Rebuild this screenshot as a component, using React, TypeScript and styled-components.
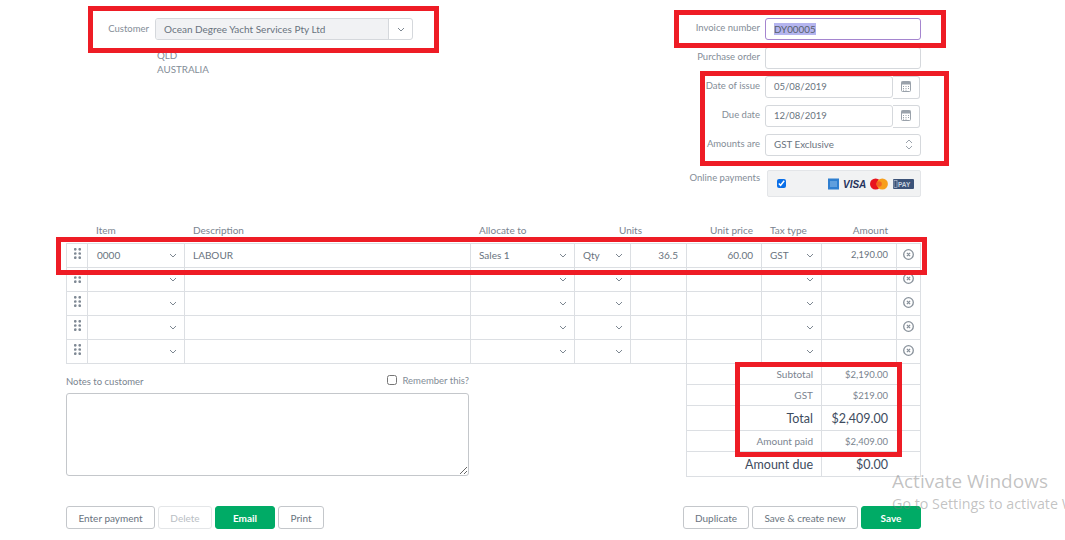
import React from 'react'
import styled, { createGlobalStyle } from 'styled-components'

const GlobalStyle = createGlobalStyle`
    html, body {
        margin: 0;
        padding: 0;
        background: #fff;
    }
    * {
        box-sizing: border-box;
    }
`

const COLUMNS = '21px 97px 286px 104px 56px 56px 75px 60px 75px 25px'

const Chevron = () => (
    <svg width="8" height="5" viewBox="0 0 8 5" fill="none">
        <path d="M1 1l3 3 3-3" stroke="#7d8791" strokeWidth="1" />
    </svg>
)

const DragDots = () => (
    <svg width="7" height="11" viewBox="0 0 7 11" fill="#7f8994">
        {[1.3, 5.5, 9.7].map((y) =>
            [1.3, 5.7].map((x) => <circle key={`${x}-${y}`} cx={x} cy={y} r="1.35" />)
        )}
    </svg>
)

const RemoveIcon = () => (
    <svg width="11" height="11" viewBox="0 0 11 11" fill="none" stroke="#88919a">
        <circle cx="5.5" cy="5.5" r="4.8" strokeWidth="1.3" />
        <path d="M3.9 3.9l3.2 3.2M7.1 3.9l-3.2 3.2" strokeWidth="1.3" />
    </svg>
)

const CalendarIcon = () => (
    <svg width="10" height="11" viewBox="0 0 10 11" fill="none">
        <rect x="0.5" y="0.5" width="9" height="10" rx="1" fill="#fff" stroke="#9aa2ab" />
        <rect x="0.5" y="0.5" width="9" height="3" fill="#9aa2ab" />
        <path d="M2 5.5h1M4.5 5.5h1M7 5.5h1M2 7.5h1M4.5 7.5h1M7 7.5h1M2 9.2h1M4.5 9.2h1" stroke="#9aa2ab" />
    </svg>
)

const UpDownIcon = () => (
    <svg width="8" height="11" viewBox="0 0 8 11" fill="none" stroke="#9aa2ab">
        <path d="M1 4l3-3 3 3M1 7l3 3 3-3" />
    </svg>
)

const PaymentLogos = () => (
    <svg width="86" height="12" viewBox="0 0 86 12">
        <rect x="0" y="0.5" width="11" height="11" fill="#2f7fd0" />
        <path d="M2 4h7M2 6h7M2 8h7" stroke="#a9d0f2" strokeWidth="0.8" />
        <text
            x="15"
            y="10"
            fontFamily="Liberation Sans, sans-serif"
            fontSize="10"
            fontWeight="700"
            fontStyle="italic"
            fill="#26335d"
        >
            VISA
        </text>
        <circle cx="47.6" cy="6" r="5.6" fill="#e8141e" />
        <circle cx="54.3" cy="6" r="5.6" fill="#f79e1b" />
        <circle cx="51" cy="6" r="2.8" fill="#f26522" />
        <rect x="65" y="1" width="21" height="10" rx="1" fill="#3b5278" />
        <text
            x="70"
            y="9"
            fontFamily="Liberation Sans, sans-serif"
            fontSize="6.5"
            fontWeight="700"
            fill="#c5d0de"
        >
            PAY
        </text>
        <rect x="66" y="2.5" width="3" height="7" fill="none" stroke="#c5d0de" strokeWidth="0.6" />
    </svg>
)

const LINE_ROWS = [
    {
        item: '0000',
        description: 'LABOUR',
        allocate: 'Sales 1',
        unit: 'Qty',
        units: '36.5',
        price: '60.00',
        tax: 'GST',
        amount: '2,190.00',
    },
    { item: '', description: '', allocate: '', unit: '', units: '', price: '', tax: '', amount: '' },
    { item: '', description: '', allocate: '', unit: '', units: '', price: '', tax: '', amount: '' },
    { item: '', description: '', allocate: '', unit: '', units: '', price: '', tax: '', amount: '' },
    { item: '', description: '', allocate: '', unit: '', units: '', price: '', tax: '', amount: '' },
]

const TOTALS = [
    { label: 'Subtotal', value: '$2,190.00', height: 21, size: 'small' },
    { label: 'GST', value: '$219.00', height: 21, size: 'small' },
    { label: 'Total', value: '$2,409.00', height: 25, size: 'large' },
    { label: 'Amount paid', value: '$2,409.00', height: 21, size: 'small' },
    { label: 'Amount due', value: '$0.00', height: 25, size: 'large' },
] as const

export default function App() {
    return (
        <SPage>
            <GlobalStyle />
            <SHeader>
                <SCustomer>
                    <SCustomerLabel>Customer</SCustomerLabel>
                    <div>
                        <SCombo>
                            <SComboValue>Ocean Degree Yacht Services Pty Ltd</SComboValue>
                            <SComboButton>
                                <Chevron />
                            </SComboButton>
                        </SCombo>
                        <SAddress>
                            QLD
                            <br />
                            AUSTRALIA
                        </SAddress>
                    </div>
                </SCustomer>
                <SInvoiceFields>
                    <SFieldLabel>Invoice number</SFieldLabel>
                    <SInput $focused>
                        <SSelected>DY00005</SSelected>
                    </SInput>
                    <SFieldLabel>Purchase order</SFieldLabel>
                    <SInput />
                    <SFieldLabel>Date of issue</SFieldLabel>
                    <SDateField>
                        <SDateInput>05/08/2019</SDateInput>
                        <SCalendarButton>
                            <CalendarIcon />
                        </SCalendarButton>
                    </SDateField>
                    <SFieldLabel>Due date</SFieldLabel>
                    <SDateField>
                        <SDateInput>12/08/2019</SDateInput>
                        <SCalendarButton>
                            <CalendarIcon />
                        </SCalendarButton>
                    </SDateField>
                    <SFieldLabel>Amounts are</SFieldLabel>
                    <SSelectField>
                        GST Exclusive
                        <UpDownIcon />
                    </SSelectField>
                    <SOnlineLabel>Online payments</SOnlineLabel>
                    <SOnlineBox>
                        <SOnlineCheck type="checkbox" defaultChecked />
                        <PaymentLogos />
                    </SOnlineBox>
                </SInvoiceFields>
            </SHeader>

            <STableHead>
                <span />
                <SHeadCell>Item</SHeadCell>
                <SHeadCell>Description</SHeadCell>
                <SHeadCell>Allocate to</SHeadCell>
                <SUnitsHead>Units</SUnitsHead>
                <SHeadCell $right>Unit price</SHeadCell>
                <SHeadCell>Tax type</SHeadCell>
                <SHeadCell $right>Amount</SHeadCell>
            </STableHead>
            <STableBody>
                {LINE_ROWS.map((row, index) => (
                    <SRow key={index}>
                        <SDragCell>
                            <DragDots />
                        </SDragCell>
                        <SItemCell>
                            {row.item}
                            <SChevronSlot>
                                <Chevron />
                            </SChevronSlot>
                        </SItemCell>
                        <SCell>{row.description}</SCell>
                        <SSelectCell>
                            {row.allocate}
                            <SChevronSlot>
                                <Chevron />
                            </SChevronSlot>
                        </SSelectCell>
                        <SSelectCell>
                            {row.unit}
                            <SChevronSlot>
                                <Chevron />
                            </SChevronSlot>
                        </SSelectCell>
                        <SCell $right>{row.units}</SCell>
                        <SCell $right>{row.price}</SCell>
                        <SSelectCell>
                            {row.tax}
                            <SChevronSlot>
                                <Chevron />
                            </SChevronSlot>
                        </SSelectCell>
                        <SAmountCell>{row.amount}</SAmountCell>
                        <SRemoveCell>
                            <RemoveIcon />
                        </SRemoveCell>
                    </SRow>
                ))}
            </STableBody>

            <SFooter>
                <SNotes>
                    <SNotesHead>
                        <SNotesLabel>Notes to customer</SNotesLabel>
                        <SRemember>
                            <SRememberBox type="checkbox" />
                            Remember this?
                        </SRemember>
                    </SNotesHead>
                    <STextarea />
                </SNotes>
                <STotals>
                    {TOTALS.map((total) => (
                        <STotalRow key={total.label} $height={total.height}>
                            <STotalLabel $size={total.size}>{total.label}</STotalLabel>
                            <STotalValue $size={total.size}>{total.value}</STotalValue>
                        </STotalRow>
                    ))}
                </STotals>
            </SFooter>

            <SActions>
                <SButtonGroup>
                    <SButton $width={89}>Enter payment</SButton>
                    <SButton $width={54} $disabled>
                        Delete
                    </SButton>
                    <SPrimaryButton $width={60}>Email</SPrimaryButton>
                    <SButton $width={46}>Print</SButton>
                </SButtonGroup>
                <SButtonGroup>
                    <SButton $width={66}>Duplicate</SButton>
                    <SButton $width={106}>Save &amp; create new</SButton>
                    <SPrimaryButton $width={60}>Save</SPrimaryButton>
                </SButtonGroup>
            </SActions>

            <SCustomerMark />
            <SInvoiceMark />
            <SDatesMark />
            <SRowMark />
            <STotalsMark />

            <SWatermark>
                <SWatermarkTitle>Activate Windows</SWatermarkTitle>
                <SWatermarkText>Go to Settings to activate Windows.</SWatermarkText>
            </SWatermark>
        </SPage>
    )
}

const SPage = styled.div`
    position: relative;
    width: 1065px;
    height: 540px;
    overflow: hidden;
    padding: 18px 0 0 66px;
    background: #fff;
    color: #69737e;
    font-family: 'Lato', 'Liberation Sans', sans-serif;
    font-size: 10px;
`
const SHeader = styled.div`
    display: flex;
    justify-content: space-between;
    width: 855px;
    height: 207px;
`
const SCustomer = styled.div`
    display: flex;
    gap: 6px;
`
const SCustomerLabel = styled.div`
    width: 83px;
    padding-top: 5px;
    text-align: right;
    font-size: 9.5px;
    color: #848d97;
`
const SCombo = styled.div`
    display: flex;
    width: 258px;
    height: 22px;
    border: 1px solid #d5d8dc;
    border-radius: 3px;
`
const SComboValue = styled.div`
    flex: 1;
    padding-left: 8px;
    line-height: 20px;
    background: #f1f2f4;
    border-radius: 2px 0 0 2px;
`
const SComboButton = styled.div`
    display: flex;
    align-items: center;
    justify-content: center;
    width: 24px;
    border-left: 1px solid #d5d8dc;
`
const SAddress = styled.div`
    margin-top: 8px;
    padding-left: 2px;
    line-height: 14px;
    font-size: 9.8px;
    color: #848d97;
`
const SInvoiceFields = styled.div`
    display: grid;
    grid-template-columns: 95px 156px;
    grid-auto-rows: 22px;
    column-gap: 5px;
    row-gap: 7px;
    align-content: start;
`
const SFieldLabel = styled.div`
    padding-top: 4px;
    text-align: right;
    font-size: 9.5px;
    color: #848d97;
`
const SOnlineLabel = styled(SFieldLabel)`
    margin-top: 7px;
    padding-top: 2px;
`
const SInput = styled.div<{ $focused?: boolean }>`
    height: 22px;
    padding-left: 8px;
    line-height: 20px;
    font-size: 9.8px;
    border: 1px solid ${(p) => (p.$focused ? '#a585cf' : '#d5d8dc')};
    border-radius: 3px;
`
const SSelected = styled.span`
    background: #b5b5ef;
    color: #56606c;
`
const SDateField = styled.div`
    display: flex;
    margin-right: 1px;
`
const SDateInput = styled(SInput)`
    width: 128px;
    font-size: 9.5px;
`
const SCalendarButton = styled.div`
    display: flex;
    align-items: flex-start;
    justify-content: center;
    width: 27px;
    height: 23px;
    padding-top: 4px;
    border: 1px solid #d5d8dc;
    border-left: 0;
    border-radius: 0 3px 3px 0;
`
const SSelectField = styled(SInput)`
    display: flex;
    align-items: center;
    justify-content: space-between;
    padding: 0 7px 2px 8px;
`
const SOnlineBox = styled.div`
    display: flex;
    align-items: center;
    justify-content: space-between;
    width: 154px;
    height: 27px;
    margin: 7px 0 0 2px;
    padding: 0 6px 0 9px;
    background: #f1f2f3;
    border: 1px solid #e3e5e8;
    border-radius: 2px;
`
const SOnlineCheck = styled.input`
    width: 9px;
    height: 9px;
    margin: 0;
    accent-color: #0a6fe8;
`
const STableHead = styled.div`
    display: grid;
    grid-template-columns: ${COLUMNS};
    width: 855px;
    height: 18px;
    line-height: 11px;
`
const SHeadCell = styled.div<{ $right?: boolean }>`
    padding: 0 8px 0 9px;
    text-align: ${(p) => (p.$right ? 'right' : 'left')};
    color: #7a848f;
`
const SUnitsHead = styled(SHeadCell)`
    grid-column: span 2;
    text-align: center;
`
const STableBody = styled.div`
    width: 855px;
    border-top: 1px solid #dcdfe3;
    border-right: 1px solid #dcdfe3;
`
const SRow = styled.div`
    display: grid;
    grid-template-columns: ${COLUMNS};
    height: 24px;
    margin-right: -1px;
    border-bottom: 1px solid #dcdfe3;
`
const SCell = styled.div<{ $right?: boolean }>`
    display: flex;
    align-items: center;
    justify-content: ${(p) => (p.$right ? 'flex-end' : 'flex-start')};
    padding: 0 8px 1px 8px;
    border-left: 1px solid #dcdfe3;
`
const SDragCell = styled(SCell)`
    align-items: flex-start;
    justify-content: center;
    padding: 4px 0 0;
`
const SSelectCell = styled(SCell)`
    justify-content: space-between;
    padding-right: 7px;
`
const SItemCell = styled(SSelectCell)`
    padding-left: 9px;
`
const SChevronSlot = styled.span`
    display: flex;
    margin-left: auto;
`
const SAmountCell = styled(SCell)`
    justify-content: flex-end;
    padding-bottom: 3px;
    font-size: 9.4px;
`
const SRemoveCell = styled(SCell)`
    justify-content: center;
    padding: 0 2px 2px 0;
`
const SFooter = styled.div`
    display: flex;
    justify-content: space-between;
    width: 855px;
`
const SNotes = styled.div`
    width: 403px;
`
const SNotesHead = styled.div`
    display: flex;
    align-items: center;
    justify-content: space-between;
    height: 29px;
    padding-top: 3px;
    font-size: 9.5px;
`
const SNotesLabel = styled.div`
    padding-top: 2px;
    color: #7a848f;
`
const SRemember = styled.label`
    display: flex;
    align-items: center;
    gap: 5px;
    color: #848d97;
`
const SRememberBox = styled.input`
    width: 10px;
    height: 10px;
    margin: 0;
`
const STextarea = styled.textarea`
    display: block;
    width: 403px;
    height: 83px;
    border: 1px solid #c4c7cb;
    border-radius: 3px;
    background: #fff;
    outline: none;
`
const STotals = styled.div`
    width: 235px;
    border-left: 1px solid #dcdfe3;
    border-right: 1px solid #dcdfe3;
`
const STotalRow = styled.div<{ $height: number }>`
    display: grid;
    grid-template-columns: 134px 75px;
    height: ${(p) => p.$height}px;
    border-bottom: 1px solid #dcdfe3;
`
const STotalLabel = styled.div<{ $size: 'small' | 'large' }>`
    display: flex;
    align-items: center;
    justify-content: flex-end;
    padding-right: 8px;
    font-size: ${(p) => (p.$size === 'large' ? '12.5px' : '10px')};
    color: ${(p) => (p.$size === 'large' ? '#3d4b5e' : '#7a848f')};
`
const STotalValue = styled(STotalLabel)`
    border-left: 1px solid #dcdfe3;
    font-size: ${(p) => (p.$size === 'large' ? '12.5px' : '9.5px')};
`
const SActions = styled.div`
    display: flex;
    justify-content: space-between;
    width: 855px;
    margin-top: 29px;
`
const SButtonGroup = styled.div`
    display: flex;
    gap: 3px;
`
const SButton = styled.div<{ $width: number; $disabled?: boolean }>`
    width: ${(p) => p.$width}px;
    height: 23px;
    line-height: 22px;
    text-align: center;
    font-size: 10px;
    color: ${(p) => (p.$disabled ? '#b9bec4' : '#69737e')};
    border: 1px solid ${(p) => (p.$disabled ? '#e4e6e8' : '#c4c7cb')};
    border-radius: 3px;
`
const SPrimaryButton = styled(SButton)`
    background: #00ab66;
    border-color: #00ab66;
    color: #fff;
    font-weight: 700;
`
const SMark = styled.div`
    position: absolute;
    border: 5px solid #ee1c25;
    pointer-events: none;
`
const SCustomerMark = styled(SMark)`
    left: 88px;
    top: 6px;
    width: 351px;
    height: 47px;
`
const SInvoiceMark = styled(SMark)`
    left: 674px;
    top: 10px;
    width: 272px;
    height: 38px;
`
const SDatesMark = styled(SMark)`
    left: 700px;
    top: 71px;
    width: 249px;
    height: 95px;
`
const SRowMark = styled(SMark)`
    left: 56px;
    top: 237px;
    width: 871px;
    height: 38px;
`
const STotalsMark = styled(SMark)`
    left: 735px;
    top: 362px;
    width: 167px;
    height: 95px;
`
const SWatermark = styled.div`
    position: absolute;
    left: 892px;
    top: 468px;
    width: 260px;
    font-family: 'Open Sans', sans-serif;
    color: rgba(120, 120, 120, 0.45);
    white-space: nowrap;
    pointer-events: none;
`
const SWatermarkTitle = styled.div`
    font-size: 19px;
    line-height: 26px;
`
const SWatermarkText = styled.div`
    font-size: 14.3px;
    line-height: 20px;
`
